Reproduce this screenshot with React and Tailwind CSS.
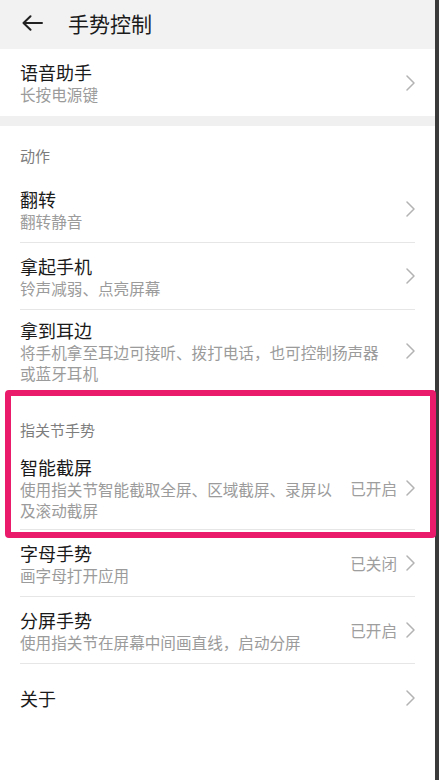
import React from "react";

const FONT = { fontFamily: '"Noto Sans CJK SC", "Noto Sans", sans-serif' };

function Chevron({ className }) {
  return (
    <svg width="9" height="16" viewBox="0 0 9 16" className={className} fill="none">
      <path d="M1 1 L8 8 L1 15" stroke="#b3b3b3" strokeWidth="1.5" strokeLinecap="round" strokeLinejoin="round" />
    </svg>
  );
}

function Row({ title, desc, status, border }) {
  return (
    <div className={"flex items-center min-h-[67px] py-2 " + (border ? "border-b border-[#e6e6e6]" : "")}>
      <div className="flex-1 min-w-0">
        <div className="text-[18px] leading-[24px] text-[#1a1a1a]">{title}</div>
        {desc && <div className="text-[15.6px] leading-[21px] text-[#9b9b9b]">{desc}</div>}
      </div>
      {status && (
        <span className="ml-[10px] shrink-0 text-[15.6px] leading-[21px] text-[#9e9e9e]">{status}</span>
      )}
      <Chevron className={"shrink-0 " + (status ? "ml-[9px]" : "ml-5")} />
    </div>
  );
}

export default function App() {
  return (
    <div className="flex min-h-[780px] w-full" style={FONT}>
      <div className="relative flex-1 bg-white">
        <div className="flex h-[49px] items-center bg-[#f2f2f2] pb-[4px] pl-[22px]">
          <svg width="21" height="16" viewBox="0 0 21 16" fill="none">
            <path d="M20 8 H2 M8.5 1.2 L1.5 8 L8.5 14.8" stroke="#222" strokeWidth="2" strokeLinecap="round" strokeLinejoin="round" />
          </svg>
          <span className="ml-[25px] text-[21px] leading-[28px] text-[#1b1b1b]">手势控制</span>
        </div>

        <div className="px-5">
          <Row title="语音助手" desc="长按电源键" />
        </div>
        <div className="h-[10px] bg-[#f0f0f0]" />

        <div className="px-5">
          <div className="pt-[20px] pb-[10px] text-[15px] leading-[20px] text-[#7d7d7d]">动作</div>
          <Row title="翻转" desc="翻转静音" border />
          <Row title="拿起手机" desc="铃声减弱、点亮屏幕" border />
          <Row title="拿到耳边" desc="将手机拿至耳边可接听、拨打电话，也可控制扬声器或蓝牙耳机" />

          <div className="pt-[28px] pb-[7px] text-[15px] leading-[20px] text-[#7d7d7d]">指关节手势</div>
          <Row title="智能截屏" desc="使用指关节智能截取全屏、区域截屏、录屏以及滚动截屏" status="已开启" border />
          <Row title="字母手势" desc="画字母打开应用" status="已关闭" border />
          <Row title="分屏手势" desc="使用指关节在屏幕中间画直线，启动分屏" status="已开启" border />
          <Row title="关于" />
        </div>

        <div className="pointer-events-none absolute left-[5px] top-[390px] h-[148px] w-[431px] rounded-[4px] border-[6px] border-[#ea1b6b]" />
      </div>
      <div className="w-[4px] bg-[#3a3a3a]" />
    </div>
  );
}
